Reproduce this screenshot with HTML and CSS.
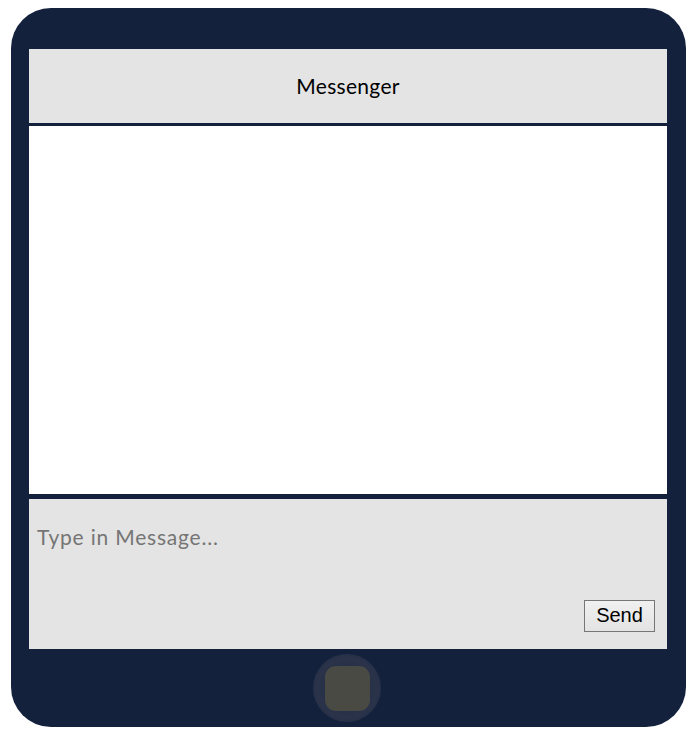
FILE: index.html
```html
<!DOCTYPE html>
<html>
<head>
<meta charset="utf-8">
<link rel="stylesheet" href="styles.css">
</head>
<body>
<div class="phone">
  <div class="screen">
    <div class="header">Messenger</div>
    <div class="messages"></div>
    <div class="composer">
      <textarea class="input" placeholder="Type in Message..."></textarea>
      <div class="actions"><button class="send">Send</button></div>
    </div>
  </div>
  <div class="home-area">
    <div class="home-ring"><div class="home-btn"></div></div>
  </div>
</div>
</body>
</html>
```
FILE: styles.css
```css
html, body { margin: 0; padding: 0; background: #fff; }
body { padding: 8px 0 0 11px; }
.phone {
  width: 675px;
  height: 719px;
  box-sizing: border-box;
  background: #14213d;
  border-radius: 40px;
  padding: 41px 19px 0 18px;
  display: flex;
  flex-direction: column;
}
.screen {
  width: 638px;
  height: 600px;
  display: flex;
  flex-direction: column;
}
.header {
  height: 77px;
  box-sizing: border-box;
  background: #e4e4e4;
  border-bottom: 3px solid #14213d;
  display: flex;
  align-items: center;
  justify-content: center;
  font-family: "Lato", sans-serif;
  font-size: 21px;
  letter-spacing: 0.3px;
  color: #000;
  padding: 0 0 1px 0;
}
.messages {
  flex: 1;
  background: #fff;
}
.composer {
  height: 155px;
  box-sizing: border-box;
  border-top: 5px solid #14213d;
  background: #e4e4e4;
  display: flex;
  flex-direction: column;
}
.input {
  flex: 1;
  border: none;
  outline: none;
  resize: none;
  background: transparent;
  padding: 25px 8px 0 8px;
  font-family: "Lato", sans-serif;
  font-size: 21px;
  letter-spacing: 0.8px;
  color: #333;
}
.input::placeholder { color: #757575; }
.actions {
  display: flex;
  justify-content: flex-end;
  padding: 0 12px 17px 0;
}
.send {
  width: 71px;
  height: 32px;
  font-family: "Liberation Sans", Arial, sans-serif;
  font-size: 20px;
  color: #000;
  background: linear-gradient(#f0f0f0, #e3e3e3);
  border: 1px solid #767676;
  border-radius: 0;
  padding: 0 0 2px 0;
}
.home-area {
  flex: 1;
  display: flex;
  justify-content: center;
  align-items: center;
  padding-right: 2px;
}
.home-ring {
  width: 68px;
  height: 68px;
  border-radius: 50%;
  background: radial-gradient(circle, #1c2842 0%, #2a3349 62%, #222c45 80%, #16223e 100%);
  display: flex;
  justify-content: center;
  align-items: center;
}
.home-btn {
  width: 45px;
  height: 45px;
  border-radius: 11px;
  background: #4a4a45;
}
```
